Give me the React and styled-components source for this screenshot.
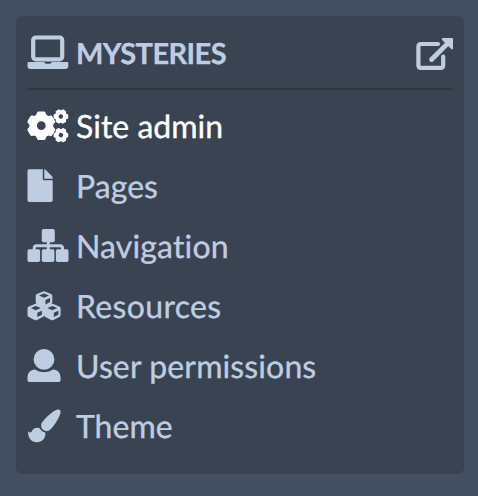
import React from "react";
import styled, { createGlobalStyle } from "styled-components";

const GlobalStyle = createGlobalStyle`
  * { box-sizing: border-box; }
  body { margin: 0; background: #444f61; font-family: Lato, sans-serif; }
`;
const Page = styled.main`
  height: 496px;
  padding: 16px 14px 22px 16px;
`;
const Panel = styled.nav`
  height: 458px;
  padding: 12px;
  border-radius: 6px;
  background: #3a4351;
  color: #bfcde2;
  font-variant-ligatures: none;
  text-rendering: geometricPrecision;
`;
const Header = styled.header`
  display: flex;
  align-items: center;
  height: 62px;
  padding-bottom: 10px;
  border-bottom: 2px solid #2e3541;
`;
const IconSlot = styled.span`
  display: flex;
  flex: 0 0 48px;
`;
const Icon = styled.svg`
  display: block;
  width: ${(p) => p.$w || 40}px;
  height: ${(p) => p.$h || 32}px;
  overflow: visible;
  fill: currentColor;
`;
const Title = styled.h1`
  flex: 1;
  margin: 0;
  padding-top: 2px;
  font-size: 29px;
  line-height: 40px;
  font-weight: 700;
  letter-spacing: -0.58px;
  -webkit-text-stroke: 0.3px currentColor;
`;
const List = styled.ul`
  margin: 6px 0 0;
  padding: 0;
  list-style: none;
`;
const Item = styled.li`
  display: flex;
  align-items: center;
  height: 60px;
  font-size: 32px;
  line-height: 60px;
  white-space: nowrap;
  letter-spacing: ${(p) => p.$tracking}px;
  -webkit-text-stroke: 0.35px currentColor;
  color: ${(p) => (p.$active ? "#fff" : "inherit")};
`;

const Laptop = () => (
  <Icon viewBox="0 0 40 32">
    <rect x="5.2" y=".5" width="29" height="21.8" rx="2.6" fill="none" stroke="currentColor" strokeWidth="4.2" />
    <path d="M.7 25.1H16.2C16.5 26.3 17.3 26.7 18.3 26.7H21.5C22.6 26.7 23.4 26.3 23.8 25.1H39.2Q40.3 25.1 40.3 26.3V29Q40.3 32 37.4 32H2.4Q-.5 32 -.5 29V26.3Q-.5 25.1 .7 25.1Z" />
  </Icon>
);

const ExternalLink = () => (
  <Icon $w={36} $h={36} viewBox="0 0 36 36" strokeLinecap="round" strokeLinejoin="round">
    <path d="M22 9H5Q2.4 9 2.4 11.6V30.3Q2.4 32.9 5 32.9H24.6Q27.2 32.9 27.2 30.3V21.7" fill="none" stroke="currentColor" strokeWidth="4.2" />
    <path d="M15.6 24.5L31 9.1" stroke="currentColor" strokeWidth="4.8" />
    <path d="M26.9 3H36Q37 3 37 4V13.4Q36.7 15.2 35.2 14L26.2 5Q25 3.5 26.9 3Z" />
  </Icon>
);

const Gear = ({ x, y, r, turn = 0 }) => (
  <g transform={`translate(${x} ${y}) scale(${r / 14.3}) rotate(${turn})`}>
    <circle r="8.2" fill="none" stroke="currentColor" strokeWidth="7.6" />
    {[0, 60, 120, 180, 240, 300].map((a) => (
      <path key={a} transform={`rotate(${a})`} d="M-5.6 -9.5L-4.2 -13.3Q-3.8 -14.3 -2.8 -14.3H2.8Q3.8 -14.3 4.2 -13.3L5.6 -9.5Z" />
    ))}
  </g>
);
const Gears = () => (
  <Icon viewBox="0 0 40 32">
    <Gear x={13.3} y={15.7} r={14.2} />
    <Gear x={32.9} y={6.5} r={7.3} turn={30} />
    <Gear x={32.9} y={25.1} r={7.3} turn={30} />
  </Icon>
);

const File = () => (
  <Icon viewBox="0 0 40 32">
    <path d="M1.2 -.8H14.8V9Q14.8 10.3 16.1 10.3H24.7V30.3Q24.7 32 23 32H1.2Q-.5 32 -.5 30.3V.9Q-.5 -.8 1.2 -.8Z" />
    <path d="M16.3 -.8Q17 -.8 17.6 -.2L24 6.3Q24.7 7 24.7 8.7H16.3Z" />
  </Icon>
);

const Sitemap = () => (
  <Icon viewBox="0 0 40 32">
    <path d="M6.2 22V18.3Q6.2 15.8 8.7 15.8H32Q34.5 15.8 34.5 18.3V22M20.3 10V22" fill="none" stroke="currentColor" strokeWidth="3" />
    <rect x="13.8" y="-1" width="13" height="13.2" rx="1.8" />
    <rect x="-.5" y="19.3" width="12.6" height="12.7" rx="1.8" />
    <rect x="13.8" y="19.3" width="12.6" height="12.7" rx="1.8" />
    <rect x="27.9" y="19.3" width="12.6" height="12.7" rx="1.8" />
  </Icon>
);

const Cube = ({ x, y }) => (
  <path
    transform={`translate(${x} ${y})`}
    fillRule="evenodd"
    d="M-1 -7.9Q0 -8.3 1 -7.9L7 -5.4Q8.3 -4.9 8.3 -3.5V3.2Q8.3 4.5 7 5.1L1.2 8Q0 8.5 -1.2 8L-7 5.1Q-8.3 4.5 -8.3 3.2V-3.5Q-8.3 -4.9 -7 -5.4ZM0 -5.9L-5 -3.8L0 -1.6L5 -3.8ZM1.5 .8V5.1L6.1 2.8V-1.2Z"
  />
);
const Cubes = () => (
  <Icon viewBox="0 0 40 32">
    <Cube x={16} y={9.3} />
    <Cube x={7.8} y={21.9} />
    <Cube x={24.3} y={21.9} />
  </Icon>
);

const User = () => (
  <Icon viewBox="0 0 40 32">
    <circle cx="16" cy="9.4" r="10.4" />
    <path d="M7 19.6Q10.5 22.2 16 22.2T25 19.6C30 19.6 32.6 23.3 32.6 28V30.3Q32.6 32 30.9 32H1.2Q-.5 32 -.5 30.3V28C-.5 23.3 2 19.6 7 19.6Z" />
  </Icon>
);

const Brush = () => (
  <Icon viewBox="0 0 40 32">
    <path d="M29.5 -.5C31.7 -1.1 33.1 .6 32.5 2.9C31.2 7.7 26.5 15.3 22.7 19.2C20.6 21.4 17.5 21.8 15.4 20.1C13 18.2 12.3 14.8 14.4 12C18 7.3 25 .7 29.5 -.5Z" />
    <path d="M0 21.5C1.7 23.1 3.3 22.6 4.1 20.8C5.5 17.8 9 17 11.8 18.3C12.8 20.6 14.7 22 17.3 22.6C18 28.2 14.3 32.2 9 32.2C3 32.2 0 28 0 21.5Z" />
  </Icon>
);

const items = [
  { label: "Site admin", Glyph: Gears, tracking: 0 },
  { label: "Pages", Glyph: File, tracking: 0.05 },
  { label: "Navigation", Glyph: Sitemap, tracking: 0.15 },
  { label: "Resources", Glyph: Cubes, tracking: 0.33 },
  { label: "User permissions", Glyph: User, tracking: 0.12 },
  { label: "Theme", Glyph: Brush, tracking: 0 },
];

export default function App() {
  return (
    <>
      <GlobalStyle />
      <Page>
        <Panel>
          <Header>
            <IconSlot><Laptop /></IconSlot>
            <Title>MYSTERIES</Title>
            <ExternalLink />
          </Header>
          <List>
            {items.map(({ label, Glyph, tracking }, i) => (
              <Item key={label} $active={i === 0} $tracking={tracking}>
                <IconSlot><Glyph /></IconSlot>
                {label}
              </Item>
            ))}
          </List>
        </Panel>
      </Page>
    </>
  );
}
